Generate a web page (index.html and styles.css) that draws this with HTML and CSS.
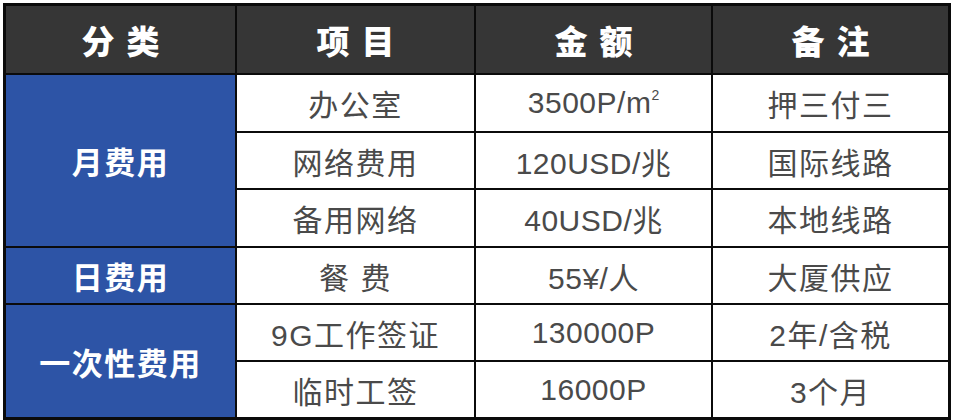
FILE: index.html
```html
<!DOCTYPE html>
<html lang="zh-CN">
<head>
<meta charset="utf-8">
<title>费用表</title>
<link rel="stylesheet" href="styles.css">
</head>
<body>
<div class="sheet">
  <div class="cell head">分类</div>
  <div class="cell head">项目</div>
  <div class="cell head">金额</div>
  <div class="cell head">备注</div>

  <div class="cell cat span3">月费用</div>
  <div class="cell">办公室</div>
  <div class="cell num">3500P/m<span class="sq">2</span></div>
  <div class="cell">押三付三</div>

  <div class="cell">网络费用</div>
  <div class="cell num">120USD/兆</div>
  <div class="cell">国际线路</div>

  <div class="cell">备用网络</div>
  <div class="cell num">40USD/兆</div>
  <div class="cell">本地线路</div>

  <div class="cell cat">日费用</div>
  <div class="cell">餐 费</div>
  <div class="cell num">55¥/人</div>
  <div class="cell">大厦供应</div>

  <div class="cell cat span2">一次性费用</div>
  <div class="cell">9G工作签证</div>
  <div class="cell num">130000P</div>
  <div class="cell">2年/含税</div>

  <div class="cell">临时工签</div>
  <div class="cell num">16000P</div>
  <div class="cell">3个月</div>
</div>
</body>
</html>
```

FILE: styles.css
```css
html, body {
  margin: 0;
  padding: 0;
  background: #ffffff;
}

body {
  padding: 3px 0 0 3px;
  font-family: "Liberation Sans", "Noto Sans CJK SC", sans-serif;
}

.sheet {
  width: 942px;
  display: grid;
  grid-template-columns: 229px 237px 235px 235px;
  grid-template-rows: 67px 56px 55px 56px 55px 55px 55px;
  gap: 2px;
  padding: 3px;
  background: #0b0b0b;
}

.cell {
  display: flex;
  align-items: center;
  justify-content: center;
  background: #ffffff;
  color: #4a4a4a;
  font-size: 30px;
  letter-spacing: 1.5px;
  white-space: nowrap;
}

.num {
  letter-spacing: 0.5px;
}

.sq {
  font-size: 14px;
  align-self: flex-start;
  margin-top: 12px;
  letter-spacing: 0;
}

.head {
  background: #363636;
  color: #ffffff;
  font-family: "Noto Sans CJK SC", sans-serif;
  font-weight: 900;
  font-size: 33px;
  letter-spacing: 12px;
  padding-left: 12px;
}

.cat {
  background: #2d54a6;
  color: #ffffff;
  font-family: "Noto Sans CJK SC", sans-serif;
  font-weight: 700;
  font-size: 31px;
  letter-spacing: 1.5px;
}

.span3 {
  grid-row: span 3;
}

.span2 {
  grid-row: span 2;
}
```
